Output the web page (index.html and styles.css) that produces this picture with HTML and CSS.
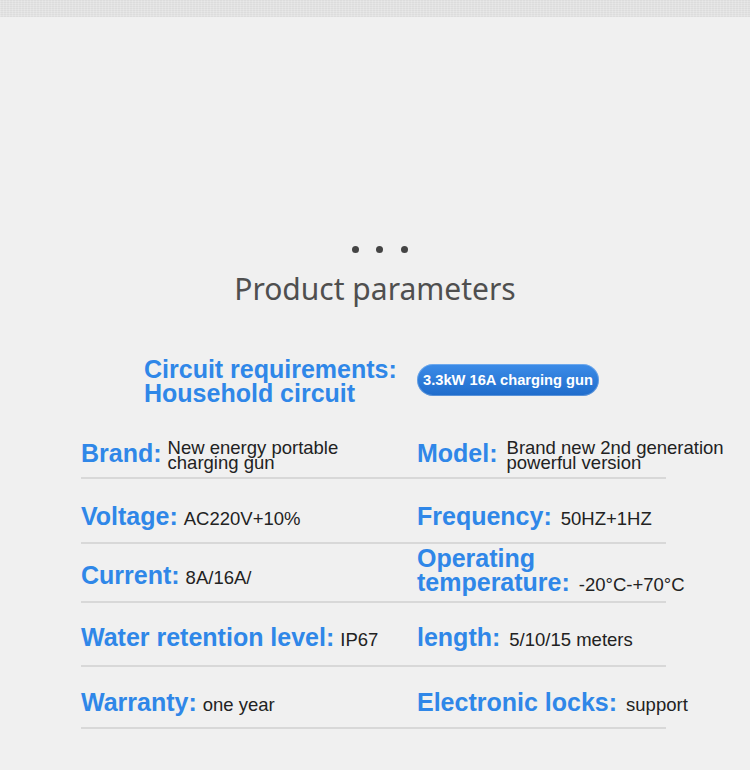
FILE: index.html
```html
<!DOCTYPE html>
<html lang="en">
<head>
<meta charset="utf-8">
<title>Product parameters</title>
<link rel="stylesheet" href="styles.css">
</head>
<body>
<div class="topbar"></div>
<section class="params">
  <div class="dots"><span></span><span></span><span></span></div>
  <h2 class="title">Product parameters</h2>
  <div class="table">
    <div class="head">
      <div class="circuit">Circuit requirements:<br>Household circuit</div>
      <div class="pill-cell"><span class="pill">3.3kW 16A charging gun</span></div>
    </div>
    <div class="row row-1">
      <div class="cell"><span class="label">Brand:</span><span class="value multi">New energy portable<br>charging gun</span></div>
      <div class="cell cell-r"><span class="label">Model:</span><span class="value multi">Brand new 2nd generation<br>powerful version</span></div>
    </div>
    <div class="row row-2">
      <div class="cell"><span class="label">Voltage:</span><span class="value">AC220V+10%</span></div>
      <div class="cell cell-r"><span class="label">Frequency:</span><span class="value">50HZ+1HZ</span></div>
    </div>
    <div class="row row-3">
      <div class="cell"><span class="label">Current:</span><span class="value">8A/16A/</span></div>
      <div class="cell cell-r low"><span class="label">Operating<br>temperature:</span><span class="value">-20°C-+70°C</span></div>
    </div>
    <div class="row row-4">
      <div class="cell"><span class="label">Water retention level:</span><span class="value">IP67</span></div>
      <div class="cell cell-r"><span class="label">length:</span><span class="value">5/10/15 meters</span></div>
    </div>
    <div class="row row-5">
      <div class="cell"><span class="label">Warranty:</span><span class="value">one year</span></div>
      <div class="cell cell-r"><span class="label">Electronic locks:</span><span class="value">support</span></div>
    </div>
  </div>
</section>
</body>
</html>
```

FILE: styles.css
```css
html, body {
  margin: 0;
  padding: 0;
  background: #f0f0f0;
}

body {
  width: 750px;
  height: 770px;
  overflow: hidden;
  font-family: "Liberation Sans", Arial, sans-serif;
}

.topbar {
  height: 17px;
  background: #e3e3e3;
  background-image:
    repeating-linear-gradient(90deg, rgba(255,255,255,0.18) 0 1px, rgba(0,0,0,0) 1px 3px),
    repeating-linear-gradient(0deg, rgba(0,0,0,0.03) 0 1px, rgba(0,0,0,0) 1px 2px);
}

.params {
  padding-top: 229px;
}

.dots {
  display: flex;
  justify-content: center;
  gap: 17.5px;
  height: 7px;
  padding-left: 9px;
}

.dots span {
  width: 7px;
  height: 7px;
  border-radius: 50%;
  background: #444;
}

.title {
  margin: 16px 0 0;
  font-family: "Noto Sans", sans-serif;
  font-weight: 400;
  font-size: 30px;
  line-height: 40px;
  color: #4f4f4f;
  text-align: center;
}

.table {
  margin: 48px 0 0 81px;
  width: 585px;
}

.head {
  display: grid;
  grid-template-columns: 336px 1fr;
  align-items: center;
  height: 48px;
}

.circuit {
  padding-left: 63px;
  font-weight: 700;
  font-size: 25px;
  line-height: 24px;
  color: #2f87e8;
  white-space: nowrap;
}

.pill-cell {
  margin-top: -2px;
}

.pill {
  display: inline-block;
  height: 32px;
  line-height: 32px;
  padding: 0 6px;
  border-radius: 16px;
  background: linear-gradient(#3c8ce8, #1f6ccb);
  box-shadow: inset 0 0 0 1px rgba(255,255,255,0.25);
  color: #fff;
  font-weight: 700;
  font-size: 14.7px;
  white-space: nowrap;
}

.row {
  display: grid;
  grid-template-columns: 336px 1fr;
  align-items: end;
  box-sizing: border-box;
  padding-bottom: 11px;
  border-bottom: 2px solid #d8d8d8;
}

.row-1 { height: 74px; padding-bottom: 7px; }
.row-2 { height: 65px; }
.row-3 { height: 59px; }
.row-4 { height: 64px; padding-bottom: 13px; }
.row-5 { height: 62px; padding-bottom: 10px; }

.cell {
  font-size: 25px;
  line-height: 24px;
  white-space: nowrap;
}

.cell.low { margin-bottom: -7px; }

.label {
  font-weight: 700;
  color: #2f87e8;
}

.value {
  margin-left: 6px;
  font-size: 18.5px;
  color: #222;
}

.cell-r .value { margin-left: 9px; }

.value.multi {
  display: inline-block;
  font-size: 18.5px;
  line-height: 15px;
  vertical-align: -7px;
}
```
